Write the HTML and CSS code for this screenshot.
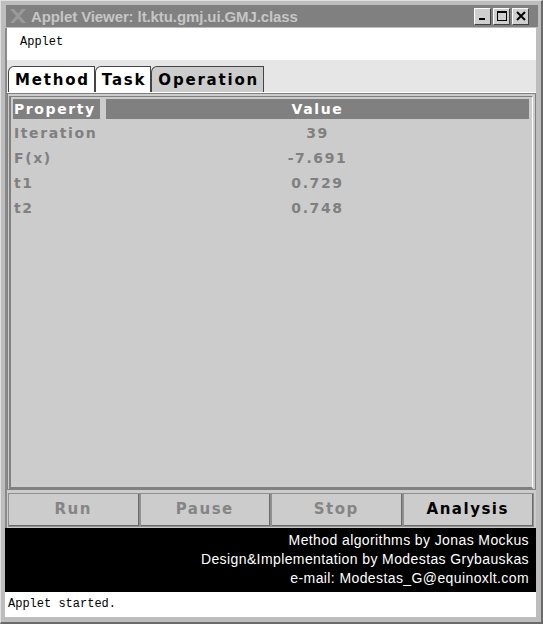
FILE: index.html
```html
<!DOCTYPE html>
<html>
<head>
<meta charset="utf-8">
<link rel="stylesheet" href="styles.css">
</head>
<body>
<div class="window">
  <div class="titlebar">
    <svg class="xlogo" width="18" height="16" viewBox="0 0 18 16">
      <path d="M1 1h4l12 14h-4z M13 1h4L5 15H1z" fill="#9a9a9a"/>
    </svg>
    <span class="title">Applet Viewer: lt.ktu.gmj.ui.GMJ.class</span>
    <div class="wbtns">
      <span class="wbtn"><svg width="14" height="14" viewBox="0 0 14 14"><rect x="3" y="9" width="6" height="2" fill="#000"/></svg></span>
      <span class="wbtn"><svg width="14" height="14" viewBox="0 0 14 14"><rect x="2.5" y="2.5" width="9" height="9" fill="none" stroke="#000" stroke-width="1"/><rect x="2" y="2" width="10" height="2" fill="#000"/></svg></span>
      <span class="wbtn"><svg width="14" height="14" viewBox="0 0 14 14"><path d="M3 3L11 11M11 3L3 11" stroke="#000" stroke-width="2"/></svg></span>
    </div>
  </div>
  <div class="menubar">Applet</div>
  <div class="applet">
    <div class="tabs">
      <div class="tab sel">Method</div>
      <div class="tab sel">Task</div>
      <div class="tab">Operation</div>
    </div>
    <div class="panel">
      <div class="table">
        <div class="hdr prop">Property</div>
        <div class="hdr val">Value</div>
        <div class="cell prop">Iteration</div><div class="cell val">39</div>
        <div class="cell prop">F(x)</div><div class="cell val">-7.691</div>
        <div class="cell prop">t1</div><div class="cell val">0.729</div>
        <div class="cell prop">t2</div><div class="cell val">0.748</div>
      </div>
    </div>
    <div class="buttons">
      <div class="btn dis">Run</div>
      <div class="btn dis">Pause</div>
      <div class="btn dis">Stop</div>
      <div class="btn">Analysis</div>
    </div>
    <div class="credits">
      <div>Method algorithms by Jonas Mockus</div>
      <div>Design&amp;Implementation by Modestas Grybauskas</div>
      <div>e-mail: Modestas_G@equinoxlt.com</div>
    </div>
  </div>
  <div class="status">Applet started.</div>
</div>
</body>
</html>
```
FILE: styles.css
```css
* { box-sizing: border-box; }
html, body { margin: 0; padding: 0; background: #b8b8b8; }
.window {
  width: 543px;
  height: 624px;
  background: #bdbdbd;
  border-top: 1px solid #e0e0e0;
  border-left: 1px solid #e0e0e0;
  border-right: 2px solid #6a6a6a;
  border-bottom: 2px solid #6a6a6a;
  padding: 4px 5px 5px 4px;
  display: flex;
  flex-direction: column;
}
.titlebar {
  height: 22px;
  background: #808080;
  display: flex;
  align-items: center;
  padding-left: 3px;
  margin-right: -2px;
  margin-left: 1px;
}
.xlogo { flex: none; margin-right: 4px; }
.title {
  font-family: "Liberation Sans", Arial, sans-serif;
  font-weight: bold;
  font-size: 15px;
  letter-spacing: -0.1px;
  color: #c6c6c6;
  flex: 1;
  white-space: nowrap;
}
.wbtns { display: flex; gap: 2px; margin-right: 9px; }
.wbtn {
  width: 17px; height: 17px;
  background: #cfcfcf;
  border-top: 1px solid #ffffff;
  border-left: 1px solid #ffffff;
  border-right: 1px solid #404040;
  border-bottom: 1px solid #404040;
  display: flex; align-items: center; justify-content: center;
}
.menubar {
  margin-top: 1px;
  height: 32px;
  background: #ffffff;
  border-left: 2px solid #8a8a8a;
  font-family: "Liberation Mono", "DejaVu Sans Mono", monospace;
  font-size: 12px;
  color: #000;
  padding: 7px 0 0 13px;
}
.applet {
  flex: 1;
  display: flex;
  flex-direction: column;
  background: #e6e6e6;
  border-left: 2px solid #8a8a8a;
}
.tabs {
  display: flex;
  height: 33px;
  padding: 6px 0 0 1px;
  border-bottom: 1px solid #ffffff;
}
.tab {
  font-family: "DejaVu Sans", Verdana, sans-serif;
  font-weight: bold;
  font-size: 15px;
  letter-spacing: 1.8px;
  color: #000;
  background: #cccccc;
  border-top: 1px solid #444;
  border-left: 1px solid #444;
  border-right: 1px solid #444;
  border-top-left-radius: 6px;
  padding: 1px 4px 0 6px;
  line-height: 24px;
}
.tab.sel { background: #ffffff; }
.panel {
  flex: 1;
  background: #cccccc;
  border: 1px solid #808080;
  padding: 2px 1px 0 1px;
}
.table {
  height: 100%;
  border-left: 2px solid #808080;
  border-top: 1px solid #808080;
  border-right: 1px solid #ffffff;
  border-bottom: 2px solid #808080;
  margin-right: 1px;
  display: grid;
  grid-template-columns: 87px 1fr;
  grid-template-rows: 20px;
  grid-auto-rows: 25px;
  column-gap: 6px;
  padding: 2px 3px 0 2px;
  align-content: start;
  font-family: "DejaVu Sans", Verdana, sans-serif;
  font-weight: bold;
  font-size: 14px;
  letter-spacing: 1.6px;
}
.hdr {
  background: #808080;
  color: #ffffff;
  height: 20px;
  line-height: 20px;
}
.hdr.prop { padding-left: 1px; }
.cell { color: #808080; line-height: 25px; margin-top: 2px; }
.cell.prop { padding-left: 1px; }
.val { text-align: center; }
.buttons {
  display: flex;
  height: 38px;
  padding: 3px 2px 1px 1px;
  background: #cccccc;
}
.btn {
  flex: 1;
  border-top: 1px solid #ffffff;
  border-left: 1px solid #ffffff;
  border-right: 2px solid #6a6a6a;
  border-bottom: 2px solid #6a6a6a;
  outline: 1px solid #909090;
  outline-offset: -1px;
  background: #cccccc;
  text-align: center;
  font-family: "DejaVu Sans", Verdana, sans-serif;
  font-weight: bold;
  font-size: 15px;
  letter-spacing: 1.5px;
  line-height: 30px;
  color: #000;
}
.btn.dis { color: #858585; }
.credits {
  background: #000;
  color: #fff;
  text-align: right;
  font-family: "Liberation Sans", Arial, sans-serif;
  font-size: 14px;
  letter-spacing: 0.4px;
  line-height: 19px;
  height: 64px;
  padding: 3px 7px 0 0;
  margin-left: -2px;
}
.status {
  height: 25px;
  background: #ffffff;
  font-family: "Liberation Mono", "DejaVu Sans Mono", monospace;
  font-size: 12px;
  color: #000;
  padding: 5px 0 0 3px;
}
```
